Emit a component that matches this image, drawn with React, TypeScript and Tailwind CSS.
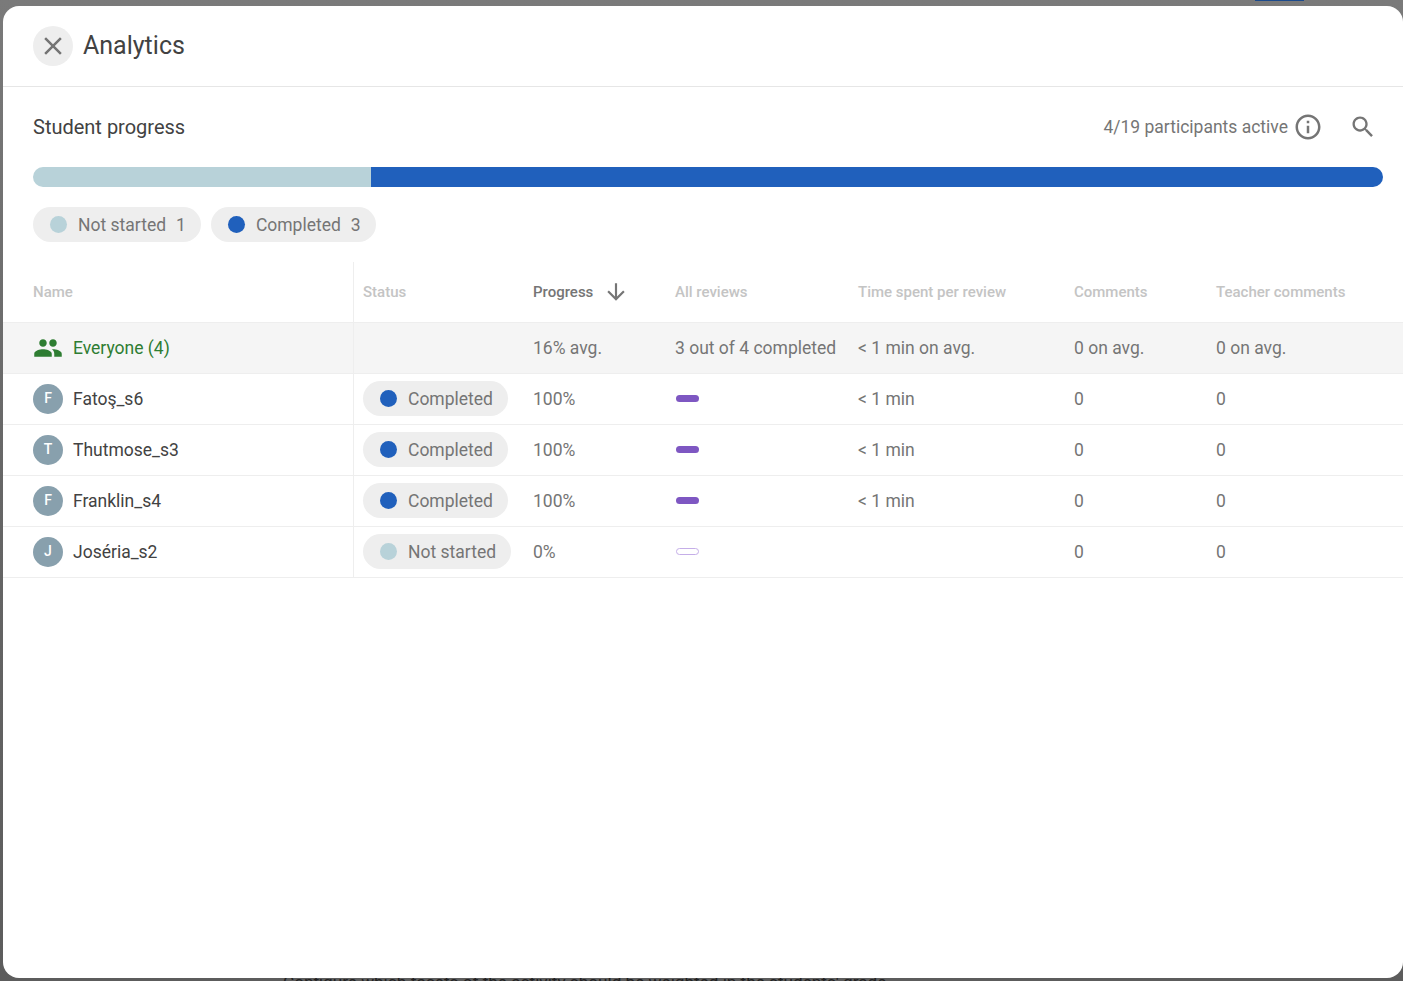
import type { ReactNode } from 'react'

const GRID = 'grid grid-cols-[351px_170px_142px_183px_216px_142px_1fr]'

type Student = { initial: string; name: string; status: 'Completed' | 'Not started'; progress: string; time: string }

const students: Student[] = [
  { initial: 'F', name: 'Fatoş_s6', status: 'Completed', progress: '100%', time: '< 1 min' },
  { initial: 'T', name: 'Thutmose_s3', status: 'Completed', progress: '100%', time: '< 1 min' },
  { initial: 'F', name: 'Franklin_s4', status: 'Completed', progress: '100%', time: '< 1 min' },
  { initial: 'J', name: 'Joséria_s2', status: 'Not started', progress: '0%', time: '' },
]

function Icon({ d, size, className }: { d: string; size: number; className?: string }) {
  return (
    <svg width={size} height={size} viewBox="0 0 24 24" fill="currentColor" className={className}>
      <path d={d} />
    </svg>
  )
}

function Chip({ dot, label, count, className = '' }: { dot: string; label: string; count?: number; className?: string }) {
  return (
    <span className={`flex h-[35px] items-center rounded-full bg-[#eeeeee] pl-[17px] pr-[15px] text-[17.5px] text-[#757575] ${className}`}>
      <span className={`mr-[11px] h-[17px] w-[17px] rounded-full ${dot}`} />
      <span className="translate-y-px">{label}</span>
      {count !== undefined && <span className="ml-[10px] translate-y-px">{count}</span>}
    </span>
  )
}

function Cell({ children, className = '' }: { children?: ReactNode; className?: string }) {
  return <div className={`flex items-center pl-[9px] text-[17.5px] text-[#757575] ${className}`}>{children}</div>
}

function HeadCell({ children, active }: { children: ReactNode; active?: boolean }) {
  return (
    <div className={`flex items-center pl-[9px] text-[15px] font-medium ${active ? 'text-[#757575]' : 'text-[#c4c4c4]'}`}>
      {children}
    </div>
  )
}

export default function App() {
  return (
    <div className="relative h-[981px] w-[1403px] overflow-hidden bg-[linear-gradient(to_bottom,#7a7a7a,#666666_50%,#5c5c5c)] font-['Roboto',sans-serif]">
      {/* page behind the dialog, only slivers show */}
      <span className="absolute left-[33px] top-[-20px] text-[16px] leading-6 text-[#222222]">Display analytics</span>
      <span className="absolute left-[1255px] top-0 h-px w-[49px] bg-[#1b4a8c]" />
      <span className="absolute left-[283px] top-[970px] whitespace-nowrap text-[17.2px] leading-6 text-[#222222]">
        Configure which facets of the activity should be weighted in the students' grade
      </span>

      <div className="relative ml-[3px] mt-[6px] h-[972px] w-[1400px] overflow-hidden rounded-[16px] bg-white">
        <header className="flex h-[81px] items-center gap-[10px] border-b border-[#e6e6e6] px-[30px]">
          <button type="button" className="flex h-10 w-10 items-center justify-center rounded-full bg-[#eeeeee] text-[#757575]">
            <Icon size={30} d="M19 6.41 17.59 5 12 10.59 6.41 5 5 6.41 10.59 12 5 17.59 6.41 19 12 13.41 17.59 19 19 17.59 13.41 12z" />
          </button>
          <h1 className="text-[25px] font-normal text-[#424242]">Analytics</h1>
        </header>

        <div className="flex h-[80px] items-center justify-between pl-[30px] pr-[26px]">
          <h2 className="text-[20px] font-normal text-[#424242]">Student progress</h2>
          <div className="flex items-center text-[17.5px] text-[#757575]">
            <span>4/19 participants active</span>
            <Icon size={30} className="ml-[5px]" d="M11 7h2v2h-2zm0 4h2v6h-2zm1-9C6.48 2 2 6.48 2 12s4.48 10 10 10 10-4.48 10-10S17.52 2 12 2zm0 18c-4.41 0-8-3.59-8-8s3.59-8 8-8 8 3.59 8 8-3.59 8-8 8z" />
            <Icon size={28} className="ml-[26px]" d="M15.5 14h-.79l-.28-.27C15.41 12.59 16 11.11 16 9.5 16 5.91 13.09 3 9.5 3S3 5.91 3 9.5 5.91 16 9.5 16c1.61 0 3.09-.59 4.23-1.57l.27.28v.79l5 4.99L20.49 19l-4.99-5zm-6 0C7.01 14 5 11.99 5 9.5S7.01 5 9.5 5 14 7.01 14 9.5 11.99 14 9.5 14z" />
          </div>
        </div>

        <div className="mx-[30px] mr-[20px] flex h-5 overflow-hidden rounded-full">
          <div className="w-1/4 bg-[#b8d2d9]" />
          <div className="flex-1 bg-[#2060bc]" />
        </div>

        <div className="ml-[30px] mt-5 flex gap-[10px]">
          <Chip dot="bg-[#b8d2d9]" label="Not started" count={1} />
          <Chip dot="bg-[#2060bc]" label="Completed" count={3} />
        </div>

        <div className="mt-5">
          <div className={`${GRID} h-[61px] border-b border-[#eeeeee]`}>
            <div className="flex items-center border-r border-[#eeeeee] pl-[30px] text-[15px] font-medium text-[#c4c4c4]">Name</div>
            <HeadCell>Status</HeadCell>
            <HeadCell active>
              Progress
              <Icon size={26} className="ml-[10px]" d="M20 12l-1.41-1.41L13 16.17V4h-2v12.17l-5.58-5.59L4 12l8 8 8-8z" />
            </HeadCell>
            <HeadCell>All reviews</HeadCell>
            <HeadCell>Time spent per review</HeadCell>
            <HeadCell>Comments</HeadCell>
            <HeadCell>Teacher comments</HeadCell>
          </div>

          <div className={`${GRID} h-[51px] border-b border-[#eeeeee] bg-[#f5f5f5]`}>
            <div className="flex items-center border-r border-[#eeeeee] pl-[30px] text-[17.5px] text-[#2e7d32]">
              <Icon size={30} className="mr-[10px]" d="M16 11c1.66 0 2.99-1.34 2.99-3S17.66 5 16 5c-1.66 0-3 1.34-3 3s1.34 3 3 3zm-8 0c1.66 0 2.99-1.34 2.99-3S9.66 5 8 5C6.34 5 5 6.34 5 8s1.34 3 3 3zm0 2c-2.33 0-7 1.17-7 3.5V19h14v-2.5c0-2.33-4.67-3.5-7-3.5zm8 0c-.29 0-.62.02-.97.05 1.16.84 1.97 1.97 1.97 3.45V19h6v-2.5c0-2.33-4.67-3.5-7-3.5z" />
              Everyone (4)
            </div>
            <Cell />
            <Cell>16% avg.</Cell>
            <Cell>3 out of 4 completed</Cell>
            <Cell>&lt; 1 min on avg.</Cell>
            <Cell>0 on avg.</Cell>
            <Cell>0 on avg.</Cell>
          </div>

          {students.map((s) => (
            <div key={s.name} className={`${GRID} h-[51px] border-b border-[#eeeeee]`}>
              <div className="flex items-center border-r border-[#eeeeee] pl-[30px] text-[17.5px] text-[#424242]">
                <span className="mr-[10px] flex h-[30px] w-[30px] items-center justify-center rounded-full bg-[#88a0ad] pb-[2px] text-[14px] font-medium text-white">
                  {s.initial}
                </span>
                {s.name}
              </div>
              <Cell>
                <Chip className="-mt-px" dot={s.status === 'Completed' ? 'bg-[#2060bc]' : 'bg-[#b8d2d9]'} label={s.status} />
              </Cell>
              <Cell>{s.progress}</Cell>
              <Cell>
                {s.status === 'Completed' ? (
                  <span className="-mt-px ml-px h-[7px] w-[23px] rounded-full bg-[#7e57c2]" />
                ) : (
                  <span className="-mt-px ml-px h-[7px] w-[23px] rounded-full border border-[#c5aee8]" />
                )}
              </Cell>
              <Cell>{s.time}</Cell>
              <Cell>0</Cell>
              <Cell>0</Cell>
            </div>
          ))}
        </div>
      </div>
    </div>
  )
}
